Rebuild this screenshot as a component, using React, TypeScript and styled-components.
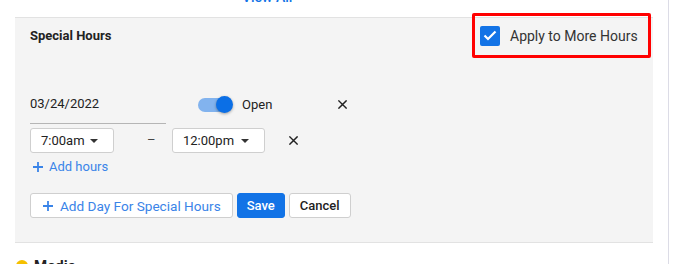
import { createGlobalStyle, styled } from "styled-components";

const GlobalStyle = createGlobalStyle`
  html, body {
    margin: 0;
    padding: 0;
    background: #ffffff;
    font-family: Roboto, "Liberation Sans", Arial, sans-serif;
    color: #222;
  }
  * { box-sizing: border-box; }
`;

const BLUE = "#1273e6";

const Page = styled.div`
  display: flex;
  width: 675px;
  height: 264px;
  overflow: hidden;
`;

const Content = styled.div`
  width: 653px;
  flex-shrink: 0;
  padding-left: 15px;
`;

const SideRule = styled.div`
  margin-left: 15px;
  width: 1px;
  height: 100%;
  background: #dcdce6;
`;

const TopBar = styled.div`
  height: 17px;
  display: flex;
  padding-left: 227px;
  overflow: hidden;
`;

const Link = styled.span`
  color: ${BLUE};
  font-size: 14px;
  font-weight: 500;
  line-height: 16px;
  margin-top: -11px;
`;

const Panel = styled.section`
  background: #f4f4f4;
  border-top: 1px solid #e2e2e2;
  border-bottom: 1px solid #e2e2e2;
  padding: 0 2px 24px 15px;
  display: flex;
  flex-direction: column;
`;

const Header = styled.div`
  display: flex;
  justify-content: space-between;
  align-items: flex-start;
`;

const Title = styled.h3`
  margin: 10px 0 0;
  font-size: 13px;
  font-weight: 700;
  line-height: 15px;
  color: #222;
`;

const Highlight = styled.label`
  margin-top: -5px;
  width: 179px;
  height: 45px;
  border: 3px solid #ff0000;
  border-radius: 2px;
  display: flex;
  align-items: center;
  gap: 10px;
  padding-left: 5px;
`;

const CheckBox = styled.span`
  width: 20px;
  height: 20px;
  border-radius: 2px;
  background: ${BLUE};
  display: flex;
  align-items: center;
  justify-content: center;
`;

const CheckLabel = styled.span`
  font-size: 14px;
  color: #333;
  line-height: 18px;
`;

const DateRow = styled.div`
  display: flex;
  align-items: center;
  margin-top: 38px;
`;

const DateField = styled.div`
  width: 136px;
  font-size: 13px;
  line-height: 16px;
  padding-bottom: 11px;
  border-bottom: 1px solid #b5b5b5;
  color: #222;
`;

const Switch = styled.span`
  margin-left: 32px;
  margin-top: -11px;
  width: 34px;
  height: 14px;
  border-radius: 7px;
  background: #82b3ee;
  display: flex;
  align-items: center;
  justify-content: flex-end;
`;

const Knob = styled.span`
  width: 17px;
  height: 17px;
  border-radius: 50%;
  background: #0b6fe6;
  margin-right: -1px;
  box-shadow: 0 1px 3px rgba(0, 0, 0, 0.35);
`;

const SwitchText = styled.span`
  margin-left: 10px;
  margin-top: -11px;
  font-size: 13px;
  line-height: 16px;
  color: #222;
`;

const CloseBtn = styled.span<{ $gap: number; $lift?: number }>`
  margin-left: ${(p) => p.$gap}px;
  margin-top: ${(p) => -(p.$lift ?? 0)}px;
  display: flex;
  align-items: center;
`;

const TimeRow = styled.div`
  display: flex;
  align-items: center;
  margin-top: 4px;
`;

const Select = styled.div<{ $w: number }>`
  width: ${(p) => p.$w}px;
  height: 25px;
  background: #fff;
  border: 1px solid #cfcfcf;
  border-radius: 3px;
  display: flex;
  align-items: center;
  justify-content: space-between;
  padding: 0 15px 0 10px;
  font-size: 13px;
  color: #222;
`;

const Dash = styled.span`
  width: 58px;
  padding-left: 33px;
  font-size: 13px;
  color: #444;
  margin-top: -3px;
`;

const AddLink = styled.div`
  margin-top: 5px;
  margin-left: 3px;
  display: flex;
  align-items: center;
  gap: 6px;
  color: #3a84e8;
  font-size: 13px;
  line-height: 18px;
`;

const Actions = styled.div`
  margin-top: 17px;
  display: flex;
  gap: 4px;
`;

const Button = styled.button<{ $primary?: boolean; $blueText?: boolean }>`
  height: 25px;
  padding: 0 ${(p) => (p.$blueText ? 11 : p.$primary ? 9 : 10)}px 0 ${(p) => (p.$blueText ? 12 : p.$primary ? 9 : 10)}px;
  border-radius: 3px;
  border: 1px solid ${(p) => (p.$primary ? BLUE : "#cfcfcf")};
  background: ${(p) => (p.$primary ? BLUE : "#fff")};
  color: ${(p) => (p.$primary ? "#fff" : p.$blueText ? "#3a84e8" : "#222")};
  font-family: Roboto, "Liberation Sans", Arial, sans-serif;
  font-size: ${(p) => (p.$blueText ? 13.6 : 13)}px;
  font-weight: ${(p) => (p.$blueText ? 400 : 500)};
  display: flex;
  align-items: center;
  gap: 7px;
`;

const NextSection = styled.div`
  margin-top: 14px;
  display: flex;
  align-items: center;
  gap: 6px;
  padding-left: 1px;
`;

const Dot = styled.span`
  width: 12px;
  height: 12px;
  border-radius: 50%;
  background: #f5c000;
`;

const NextTitle = styled.span`
  font-size: 15px;
  font-weight: 700;
  color: #222;
`;

const Cross = ({ size = 9 }: { size?: number }) => (
  <svg width={size} height={size} viewBox="0 0 10 10">
    <path d="M1 1 L9 9 M9 1 L1 9" stroke="#222" strokeWidth="1.6" strokeLinecap="square" />
  </svg>
);

const Caret = () => (
  <svg width="8" height="4" viewBox="0 0 8 4">
    <path d="M0 0 H8 L4 4 Z" fill="#333" />
  </svg>
);

const Plus = ({ color }: { color: string }) => (
  <svg width="10" height="10" viewBox="0 0 10 10">
    <path d="M5 0 V10 M0 5 H10" stroke={color} strokeWidth="1.8" />
  </svg>
);

export default function App() {
  return (
    <>
      <GlobalStyle />
      <Page>
        <Content>
          <TopBar>
            <Link>View All</Link>
          </TopBar>
          <Panel>
            <Header>
              <Title>Special Hours</Title>
              <Highlight>
                <CheckBox>
                  <svg width="14" height="11" viewBox="0 0 14 11">
                    <path d="M1.5 5.5 L5 9 L12.5 1.5" stroke="#fff" strokeWidth="2.2" fill="none" />
                  </svg>
                </CheckBox>
                <CheckLabel>Apply to More Hours</CheckLabel>
              </Highlight>
            </Header>

            <DateRow>
              <DateField>03/24/2022</DateField>
              <Switch>
                <Knob />
              </Switch>
              <SwitchText>Open</SwitchText>
              <CloseBtn $gap={66} $lift={11}>
                <Cross />
              </CloseBtn>
            </DateRow>

            <TimeRow>
              <Select $w={84}>
                7:00am <Caret />
              </Select>
              <Dash>–</Dash>
              <Select $w={93}>
                12:00pm <Caret />
              </Select>
              <CloseBtn $gap={24}>
                <Cross />
              </CloseBtn>
            </TimeRow>

            <AddLink>
              <Plus color="#3a84e8" />
              Add hours
            </AddLink>

            <Actions>
              <Button $blueText>
                <Plus color="#3a84e8" />
                Add Day For Special Hours
              </Button>
              <Button $primary>Save</Button>
              <Button>Cancel</Button>
            </Actions>
          </Panel>
          <NextSection>
            <Dot />
            <NextTitle>Media</NextTitle>
          </NextSection>
        </Content>
        <SideRule />
      </Page>
    </>
  );
}
